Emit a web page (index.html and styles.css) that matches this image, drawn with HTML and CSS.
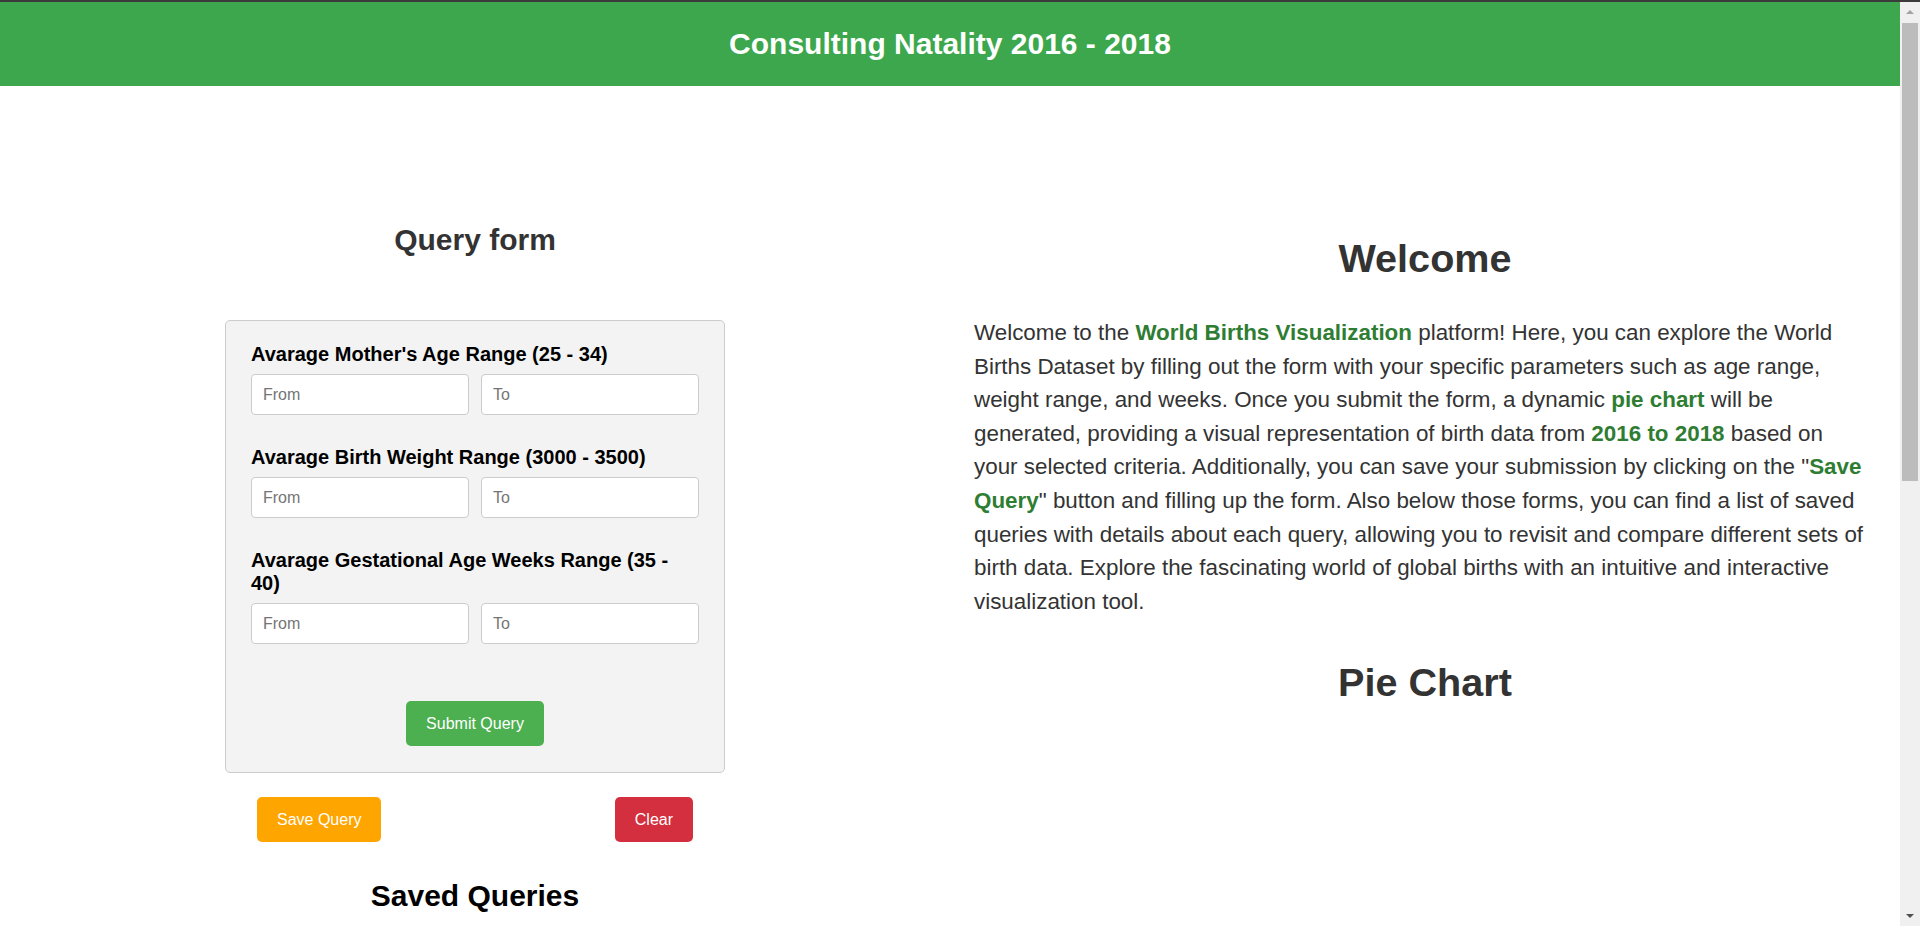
FILE: index.html
```html
<!DOCTYPE html>
<html lang="en">
<head>
<meta charset="utf-8">
<title>Consulting Natality 2016 - 2018</title>
<link rel="stylesheet" href="styles.css">
</head>
<body>
<header class="topbar">
  <h1 class="topbar-title">Consulting Natality 2016 - 2018</h1>
</header>
<main class="main">
  <section class="left">
    <h2 class="section-title">Query form</h2>
    <form class="query-form">
      <div class="field-group">
        <label class="field-label">Avarage Mother's Age Range (25 - 34)</label>
        <div class="field-row">
          <input class="field-input" type="text" placeholder="From">
          <input class="field-input" type="text" placeholder="To">
        </div>
      </div>
      <div class="field-group">
        <label class="field-label">Avarage Birth Weight Range (3000 - 3500)</label>
        <div class="field-row">
          <input class="field-input" type="text" placeholder="From">
          <input class="field-input" type="text" placeholder="To">
        </div>
      </div>
      <div class="field-group">
        <label class="field-label">Avarage Gestational Age Weeks Range (35 - 40)</label>
        <div class="field-row">
          <input class="field-input" type="text" placeholder="From">
          <input class="field-input" type="text" placeholder="To">
        </div>
      </div>
      <div class="submit-row">
        <button class="btn btn-submit" type="button">Submit Query</button>
      </div>
    </form>
    <div class="action-row">
      <button class="btn btn-save" type="button">Save Query</button>
      <button class="btn btn-clear" type="button">Clear</button>
    </div>
    <h2 class="saved-title">Saved Queries</h2>
    <div class="saved-list"></div>
  </section>
  <section class="right">
    <h2 class="big-title welcome-title">Welcome</h2>
    <p class="intro">Welcome to the <strong class="hl">World Births Visualization</strong> platform! Here, you can explore the World Births Dataset by filling out the form with your specific parameters such as age range, weight range, and weeks. Once you submit the form, a dynamic <strong class="hl">pie chart</strong> will be generated, providing a visual representation of birth data from <strong class="hl">2016 to 2018</strong> based on your selected criteria. Additionally, you can save your submission by clicking on the "<strong class="hl">Save Query</strong>" button and filling up the form. Also below those forms, you can find a list of saved queries with details about each query, allowing you to revisit and compare different sets of birth data. Explore the fascinating world of global births with an intuitive and interactive visualization tool.</p>
    <h2 class="big-title pie-title">Pie Chart</h2>
    <div class="chart-area"></div>
  </section>
</main>
<div class="scrollbar" aria-hidden="true">
  <span class="sb-btn"><span class="sb-arrow sb-up"></span></span>
  <span class="sb-track"><span class="sb-thumb"></span></span>
  <span class="sb-btn"><span class="sb-arrow sb-down"></span></span>
</div>
</body>
</html>
```
FILE: styles.css
```css
html, body {
  margin: 0;
  padding: 0;
}

body {
  font-family: "Liberation Sans", Arial, sans-serif;
  background: #ffffff;
  border-top: 2px solid #3b3b3b;
  padding-right: 20px;
}

/* imitation of the browser's classic scrollbar */
.scrollbar {
  position: fixed;
  top: 2px;
  right: 0;
  bottom: 0;
  width: 20px;
  background: #f0f0f0;
  display: flex;
  flex-direction: column;
}

.sb-btn {
  height: 20px;
  display: flex;
  align-items: center;
  justify-content: center;
}

.sb-arrow {
  width: 0;
  height: 0;
  border-left: 4px solid transparent;
  border-right: 4px solid transparent;
}

.sb-up {
  border-bottom: 4px solid #a3a3a3;
}

.sb-down {
  border-top: 4px solid #505050;
}

.sb-track {
  flex: 1;
  padding: 1px 2px 0;
}

.sb-thumb {
  display: block;
  height: 458px;
  background: #bcbcbc;
}

.topbar {
  height: 84px;
  background: #3ca74c;
  display: flex;
  align-items: center;
  justify-content: center;
}

.topbar-title {
  margin: 0;
  color: #ffffff;
  font-size: 30px;
  font-weight: bold;
  line-height: 34px;
}

.main {
  display: grid;
  grid-template-columns: 1fr 1fr;
}

.left {
  display: flex;
  flex-direction: column;
  align-items: center;
  padding-top: 137px;
}

.section-title {
  margin: 0;
  font-size: 30px;
  line-height: 34px;
  color: #333333;
  font-weight: bold;
}

.query-form {
  width: 500px;
  box-sizing: border-box;
  margin-top: 63px;
  padding: 22px 25px 26px;
  background: #f3f3f3;
  border: 1px solid #cccccc;
  border-radius: 5px;
}

.field-group {
  margin-bottom: 31px;
}

.field-group:last-of-type {
  margin-bottom: 0;
}

.field-label {
  display: block;
  font-size: 20px;
  line-height: 23px;
  font-weight: bold;
  color: #000000;
  margin-bottom: 8px;
}

.field-row {
  display: flex;
  gap: 12px;
}

.field-input {
  flex: 1;
  min-width: 0;
  height: 41px;
  box-sizing: border-box;
  padding: 0 11px;
  border: 1px solid #cccccc;
  border-radius: 4px;
  background: #ffffff;
  font-family: "Liberation Sans", Arial, sans-serif;
  font-size: 16px;
  color: #333333;
}

.field-input::placeholder {
  color: #757575;
}

.submit-row {
  display: flex;
  justify-content: center;
  margin-top: 57px;
}

.btn {
  height: 45px;
  padding: 0 20px;
  border: none;
  border-radius: 5px;
  color: #ffffff;
  font-family: "Liberation Sans", Arial, sans-serif;
  font-size: 16px;
  cursor: pointer;
}

.btn-submit {
  background: #4caf50;
}

.action-row {
  width: 500px;
  box-sizing: border-box;
  padding: 0 32px;
  margin-top: 24px;
  display: flex;
  justify-content: space-between;
}

.btn-save {
  background: #ffa500;
}

.btn-clear {
  background: #d42f3e;
}

.saved-title {
  margin: 37px 0 0;
  font-size: 30px;
  line-height: 34px;
  color: #000000;
  font-weight: bold;
}

.saved-list {
  min-height: 880px;
}

.right {
  padding: 149px 24px 0;
}

.big-title {
  margin: 0;
  text-align: center;
  font-size: 39.6px;
  line-height: 46px;
  color: #333333;
  font-weight: bold;
}

.intro {
  margin: 35px 0 0;
  padding-right: 7px;
  font-size: 22.4px;
  line-height: 33.6px;
  color: #333333;
}

.hl {
  color: #2e7d32;
  font-weight: bold;
}

.pie-title {
  margin-top: 41px;
}

.chart-area {
  height: 400px;
}
```
